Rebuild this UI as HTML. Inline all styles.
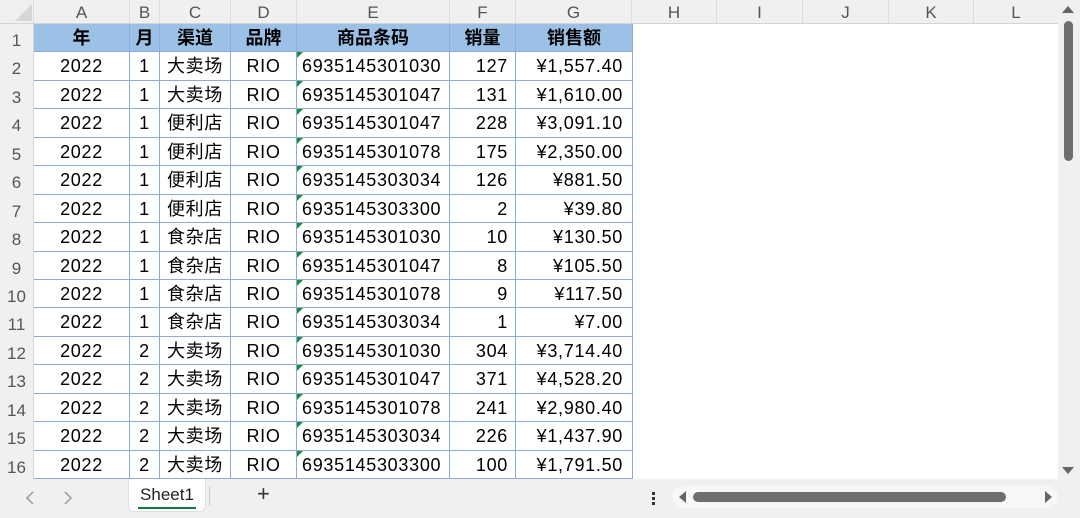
<!DOCTYPE html>
<html><head><meta charset="utf-8"><style>
*{margin:0;padding:0;box-sizing:border-box}
body{width:1080px;height:518px;overflow:hidden;background:#fff;font-family:"Liberation Sans","Noto Sans CJK SC",sans-serif;position:relative}
.colhdr{position:absolute;left:0;top:0;width:1058px;height:24px;background:#f0f0f0;border-bottom:1px solid #d4d4d4}
.ch{position:absolute;top:0;height:23px;font-size:17px;color:#555;text-align:center;line-height:25px;border-right:1px solid #dcdcdc}
.rowhdr{position:absolute;left:0;top:24px;width:34px;height:455px;background:#f0f0f0;border-right:1px solid #d4d4d4}
.rh{position:absolute;left:0;width:33px;font-size:17px;color:#555;text-align:center;height:28.44px;line-height:34px}
.grid{position:absolute;left:34px;top:24px;display:grid;grid-template-columns:96px 30px 71px 66px 153px 66px 116px;grid-template-rows:repeat(16,28.44px);border-right:1px solid #8eaadb}
.grid div{border-right:1px solid #8eaadb;border-bottom:1px solid #8eaadb;font-size:18px;letter-spacing:0.7px;color:#000;line-height:29px;white-space:nowrap;text-align:center;position:relative;overflow:hidden}
.grid div:nth-child(7n){border-right:none}
.grid .h{background:#9bc2e6;font-weight:bold;letter-spacing:0}
.grid .l{text-align:left;padding-left:5px}
.grid .l::before{content:"";position:absolute;left:0;top:0;border-top:6px solid #1e8a3a;border-right:6px solid transparent}
.grid .r{text-align:right;padding-right:7px}
.grid .g{text-align:right;padding-right:9px}
.bottom{position:absolute;left:0;top:479px;width:1080px;height:39px;background:#f0f0f0}
.vs{position:absolute;left:1058px;top:0;width:22px;height:479px;background:#f0f0f0}
</style></head><body>
<div class="colhdr">
<div style="position:absolute;left:15px;top:4px;width:0;height:0;border-left:17px solid transparent;border-bottom:17px solid #d6d6d6"></div>
<div class="ch" style="left:0;width:34px"></div>
<div class="ch" style="left:34px;width:96px">A</div>
<div class="ch" style="left:130px;width:30px">B</div>
<div class="ch" style="left:160px;width:71px">C</div>
<div class="ch" style="left:231px;width:66px">D</div>
<div class="ch" style="left:297px;width:153px">E</div>
<div class="ch" style="left:450px;width:66px">F</div>
<div class="ch" style="left:516px;width:116px">G</div>
<div class="ch" style="left:632px;width:85px">H</div>
<div class="ch" style="left:717px;width:86px">I</div>
<div class="ch" style="left:803px;width:86px">J</div>
<div class="ch" style="left:889px;width:85px">K</div>
<div class="ch" style="left:974px;width:84px;border-right:none">L</div>
</div>
<div class="rowhdr">
<div class="rh" style="top:0">1</div><div class="rh" style="top:28.44px">2</div><div class="rh" style="top:56.88px">3</div><div class="rh" style="top:85.32px">4</div><div class="rh" style="top:113.76px">5</div><div class="rh" style="top:142.2px">6</div><div class="rh" style="top:170.64px">7</div><div class="rh" style="top:199.08px">8</div><div class="rh" style="top:227.52px">9</div><div class="rh" style="top:255.96px">10</div><div class="rh" style="top:284.4px">11</div><div class="rh" style="top:312.84px">12</div><div class="rh" style="top:341.28px">13</div><div class="rh" style="top:369.72px">14</div><div class="rh" style="top:398.16px">15</div><div class="rh" style="top:426.6px">16</div>
</div>
<div class="grid">
<div class="h">年</div><div class="h">月</div><div class="h">渠道</div><div class="h">品牌</div><div class="h">商品条码</div><div class="h">销量</div><div class="h">销售额</div>
<div>2022</div><div>1</div><div>大卖场</div><div>RIO</div><div class="l">6935145301030</div><div class="r">127</div><div class="g">¥1,557.40</div>
<div>2022</div><div>1</div><div>大卖场</div><div>RIO</div><div class="l">6935145301047</div><div class="r">131</div><div class="g">¥1,610.00</div>
<div>2022</div><div>1</div><div>便利店</div><div>RIO</div><div class="l">6935145301047</div><div class="r">228</div><div class="g">¥3,091.10</div>
<div>2022</div><div>1</div><div>便利店</div><div>RIO</div><div class="l">6935145301078</div><div class="r">175</div><div class="g">¥2,350.00</div>
<div>2022</div><div>1</div><div>便利店</div><div>RIO</div><div class="l">6935145303034</div><div class="r">126</div><div class="g">¥881.50</div>
<div>2022</div><div>1</div><div>便利店</div><div>RIO</div><div class="l">6935145303300</div><div class="r">2</div><div class="g">¥39.80</div>
<div>2022</div><div>1</div><div>食杂店</div><div>RIO</div><div class="l">6935145301030</div><div class="r">10</div><div class="g">¥130.50</div>
<div>2022</div><div>1</div><div>食杂店</div><div>RIO</div><div class="l">6935145301047</div><div class="r">8</div><div class="g">¥105.50</div>
<div>2022</div><div>1</div><div>食杂店</div><div>RIO</div><div class="l">6935145301078</div><div class="r">9</div><div class="g">¥117.50</div>
<div>2022</div><div>1</div><div>食杂店</div><div>RIO</div><div class="l">6935145303034</div><div class="r">1</div><div class="g">¥7.00</div>
<div>2022</div><div>2</div><div>大卖场</div><div>RIO</div><div class="l">6935145301030</div><div class="r">304</div><div class="g">¥3,714.40</div>
<div>2022</div><div>2</div><div>大卖场</div><div>RIO</div><div class="l">6935145301047</div><div class="r">371</div><div class="g">¥4,528.20</div>
<div>2022</div><div>2</div><div>大卖场</div><div>RIO</div><div class="l">6935145301078</div><div class="r">241</div><div class="g">¥2,980.40</div>
<div>2022</div><div>2</div><div>大卖场</div><div>RIO</div><div class="l">6935145303034</div><div class="r">226</div><div class="g">¥1,437.90</div>
<div>2022</div><div>2</div><div>大卖场</div><div>RIO</div><div class="l">6935145303300</div><div class="r">100</div><div class="g">¥1,791.50</div>
</div>
<div class="vs">
<div style="position:absolute;left:4px;top:6px;width:0;height:0;border-left:6px solid transparent;border-right:6px solid transparent;border-bottom:7px solid #666"></div>
<div style="position:absolute;left:6px;top:21px;width:9px;height:140px;background:#6e6e6e;border-radius:5px"></div>
<div style="position:absolute;left:4px;top:467px;width:0;height:0;border-left:6px solid transparent;border-right:6px solid transparent;border-top:7px solid #666"></div>
</div>
<div class="bottom">
<svg style="position:absolute;left:24px;top:11px" width="60" height="16"><path d="M9 2 L3 8 L9 14" stroke="#999" stroke-width="1.5" fill="none"/><path d="M41 2 L47 8 L41 14" stroke="#999" stroke-width="1.5" fill="none"/></svg>
<div style="position:absolute;left:128px;top:0;width:78px;height:33px;background:#fff;border-radius:0 0 6px 6px;border:1px solid #e0e0e0;border-top:none;text-align:center;font-size:17px;line-height:32px;color:#222">Sheet1<div style="position:absolute;left:9px;top:28px;width:58px;height:2px;background:#107c41"></div></div>
<div style="position:absolute;left:209px;top:7px;width:1px;height:20px;background:#ccc"></div>
<div style="position:absolute;left:257px;top:2px;font-size:22px;color:#333">+</div>
<div style="position:absolute;left:652px;top:13px;width:3px;height:3px;background:#333;box-shadow:0 5px 0 #333,0 10px 0 #333"></div>
<div style="position:absolute;left:672px;top:7px;width:386px;height:22px;background:#f7f7f7;border-radius:11px"></div>
<div style="position:absolute;left:679px;top:12px;width:0;height:0;border-top:6px solid transparent;border-bottom:6px solid transparent;border-right:7px solid #666"></div>
<div style="position:absolute;left:693px;top:13px;width:313px;height:10px;background:#6e6e6e;border-radius:5px"></div>
<div style="position:absolute;left:1045px;top:12px;width:0;height:0;border-top:6px solid transparent;border-bottom:6px solid transparent;border-left:7px solid #666"></div>
</div>
</body></html>
